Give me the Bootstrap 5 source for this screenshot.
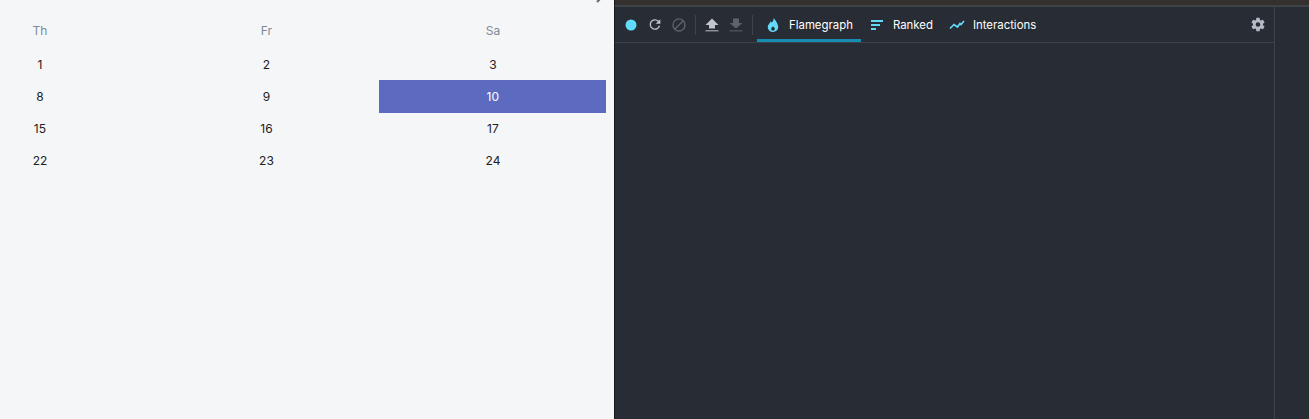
<!doctype html>
<html lang="en">
<head>
<meta charset="utf-8">
<title>Calendar and profiler</title>
<link href="https://cdn.jsdelivr.net/npm/bootstrap@5.3.0/dist/css/bootstrap.min.css" rel="stylesheet">
<style>
html,body{height:419px;overflow:hidden}
body{background:#f4f6f8;font-family:Inter,"Liberation Sans",sans-serif}
.shell{height:419px}
.cal-side{width:614px;flex:none;background:#f4f6f8;overflow:hidden;padding-right:8px}
.cal-top{height:14px;overflow:hidden}
.cal-chev{display:block;margin-left:auto;margin-right:2px;margin-top:-9px}
.cal-row{display:grid;grid-template-columns:repeat(3,226.5px);height:32.2px;align-items:stretch;margin-left:-73.3px}
.cal-head{height:34px}
.cal-cell{display:flex;align-items:center;justify-content:center;font-size:12px;color:#212121;padding:1px 0 0 0}
.cal-head .cal-cell{color:#7d8a96;padding:0 0 1px 0}
.cal-on{background:#5c6bc0;color:#fff!important;margin-left:-.4px;margin-bottom:-.7px;padding-bottom:.7px}
.dev-side{flex:1;background:#282c34;display:flex;flex-direction:column;border-left:1px solid #181a1f;min-width:0}
.dev-strip{height:7px;background:#33302e;border-bottom:2px solid #3e4249;flex:none}
.dev-body{flex:1;display:flex;min-height:0}
.dev-main{flex:1;min-width:0}
.dev-bar{height:36px;border-bottom:1px solid #3e4249;display:flex;align-items:center;padding-left:8px}
.dev-rail{width:35px;flex:none;border-left:1px solid #3e4249}
.tb-ic{display:flex;align-items:center;justify-content:center;width:16px;height:16px;flex:none}
.tb-sep{width:1px;height:20px;background:#3e4249;flex:none}
.tb-sep-a{margin:0 8px}
.tb-sep-b{margin:0 4px 0 8px}
.tb-tab{display:flex;align-items:center;height:35px;font-size:11.4px;color:#fff;gap:8px;padding:0 8px;white-space:nowrap}
.tb-lbl{padding-top:2px}
.tb-active{box-shadow:inset 0 -3px 0 #178db3;color:#fff}
.tb-spacer{flex:1}
</style>
</head>
<body>
<div class="shell d-flex">
  <div class="cal-side">
    <div class="cal-top">
      <svg class="cal-chev" width="10" height="14" viewBox="0 0 10 14"><path d="M3 1l5 5-5 5" fill="none" stroke="#5f6b7a" stroke-width="2"/></svg>
    </div>
    <div class="cal-row cal-head"><div class="cal-cell">Th</div><div class="cal-cell">Fr</div><div class="cal-cell">Sa</div></div>
    <div class="cal-row"><div class="cal-cell">1</div><div class="cal-cell">2</div><div class="cal-cell">3</div></div>
    <div class="cal-row"><div class="cal-cell">8</div><div class="cal-cell">9</div><div class="cal-cell cal-on">10</div></div>
    <div class="cal-row"><div class="cal-cell">15</div><div class="cal-cell">16</div><div class="cal-cell">17</div></div>
    <div class="cal-row"><div class="cal-cell">22</div><div class="cal-cell">23</div><div class="cal-cell">24</div></div>
  </div>
  <div class="dev-side">
    <div class="dev-strip"></div>
    <div class="dev-body">
      <div class="dev-main">
        <div class="dev-bar">
          <span class="tb-ic"><svg width="12" height="12" viewBox="0 0 12 12"><circle cx="6" cy="6" r="5.500" fill="#61dafb"/></svg></span>
          <span class="tb-ic ms-2"><svg width="17" height="17" viewBox="0 0 24 24"><path fill="#c2c5ca" d="M17.650 6.350A7.960 7.960 0 0 0 12 4a8 8 0 1 0 7.730 10h-2.080A6 6 0 1 1 12 6c1.660 0 3.140.690 4.220 1.780L13 11h7V4l-2.350 2.350z"/></svg></span>
          <span class="tb-ic ms-2"><svg width="16" height="16" viewBox="0 0 24 24"><path fill="#5e6268" d="M12 2a10 10 0 1 0 0 20 10 10 0 0 0 0-20zM4 12a8 8 0 0 1 12.900-6.300L5.700 16.900A7.900 7.900 0 0 1 4 12zm8 8a7.900 7.900 0 0 1-4.900-1.700L18.300 7.100A8 8 0 0 1 12 20z"/></svg></span>
          <span class="tb-sep tb-sep-a"></span>
          <span class="tb-ic"><svg width="14" height="14" viewBox="0 0 14 14"><path fill="#c2c5ca" d="M7 .5L13.500 7H10v3.500H4V7H.5z"/><path fill="#8b8e94" d="M.5 12h13v1.500H.5z"/></svg></span>
          <span class="tb-ic ms-2"><svg width="14" height="14" viewBox="0 0 14 14"><path fill="#5e6268" d="M4 .5h6V5h3.500L7 10.500.5 5H4z"/><path fill="#4a4e55" d="M.5 12h13v1.500H.5z"/></svg></span>
          <span class="tb-sep tb-sep-b"></span>
          <div class="tb-tab tb-active"><svg width="16" height="16" viewBox="0 0 16 16"><path fill="#61dafb" d="M8.500 1c.4 2.200-.7 3.300-1.800 4.600C6.300 4.900 6 4.500 5.500 4.200 5.600 5.800 2.800 7.200 2.800 10c0 2.800 2.200 5 5.200 5s5.200-2.200 5.200-4.900C13.200 6.500 10.300 3 8.500 1zM8 13.500c-1.100 0-1.800-.6-1.800-1.600 0-1 1-1.500 1.800-2.600.8 1.100 1.800 1.600 1.800 2.600 0 1-.7 1.600-1.800 1.600z"/></svg><span class="tb-lbl">Flamegraph</span></div>
          <div class="tb-tab"><svg width="16" height="16" viewBox="0 0 16 16"><path fill="#61dafb" d="M2 3h12v2H2zM2 7h9v2H2zM2 11h5v2H2z"/></svg><span class="tb-lbl">Ranked</span></div>
          <div class="tb-tab"><svg width="16" height="16" viewBox="0 0 16 16"><path fill="none" stroke="#61dafb" stroke-width="1.700" d="M1 11.500l4-4 3.500 2.500L11 6.500l1 1 3-3.500"/></svg><span class="tb-lbl">Interactions</span></div>
          <span class="tb-spacer"></span>
          <span class="tb-ic me-2"><svg width="17" height="17" viewBox="0 0 24 24"><path fill="#b5bac4" d="M19.430 12.980c.04-.32.07-.64.07-.98s-.03-.66-.07-.98l2.110-1.650c.19-.15.240-.42.120-.64l-2-3.460c-.12-.22-.39-.3-.61-.22l-2.490 1c-.52-.4-1.080-.73-1.690-.98l-.38-2.650A.49.490 0 0 0 14 2h-4c-.25 0-.46.180-.49.420l-.38 2.650c-.61.250-1.170.590-1.690.980l-2.490-1c-.23-.090-.49 0-.61.220l-2 3.460c-.13.220-.07.490.12.640l2.110 1.650c-.04.320-.07.650-.07.980s.03.660.07.980l-2.110 1.650c-.19.150-.24.420-.12.640l2 3.460c.12.220.39.300.61.220l2.490-1c.52.400 1.080.730 1.690.980l.38 2.650c.03.240.24.420.49.420h4c.25 0 .46-.18.490-.42l.38-2.650c.61-.25 1.170-.59 1.690-.98l2.490 1c.23.090.49 0 .61-.22l2-3.460c.12-.22.07-.49-.12-.64l-2.110-1.650zM12 15.500a3.500 3.500 0 1 1 0-7 3.500 3.500 0 0 1 0 7z"/></svg></span>
        </div>
      </div>
      <div class="dev-rail"></div>
    </div>
  </div>
</div>
<script src="https://cdn.jsdelivr.net/npm/bootstrap@5.3.0/dist/js/bootstrap.bundle.min.js"></script>
</body>
</html>
